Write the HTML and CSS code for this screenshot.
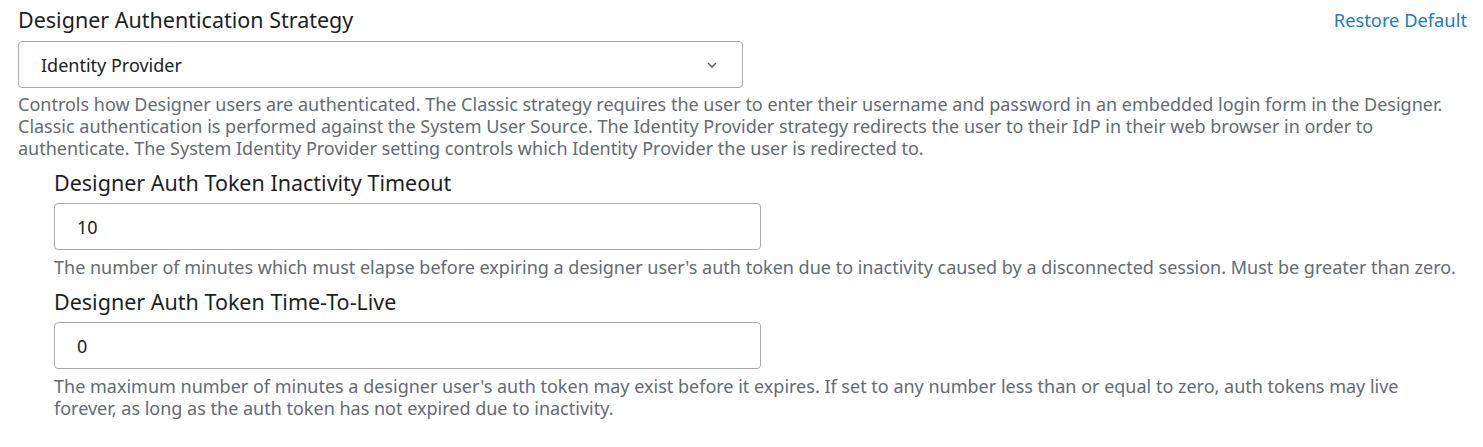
FILE: index.html
```html
<!DOCTYPE html>
<html>
<head>
<meta charset="utf-8">
<link rel="stylesheet" href="styles.css">
</head>
<body>
<div class="page">
  <div class="field">
    <div class="field-head">
      <div class="label">Designer Authentication Strategy</div>
      <a class="restore">Restore Default</a>
    </div>
    <div class="select">
      <span>Identity Provider</span>
      <svg class="chev" width="12" height="8" viewBox="0 0 12 8"><path d="M2 2 L6 6 L10 2" fill="none" stroke="#555" stroke-width="1.5"/></svg>
    </div>
    <div class="desc">Controls how Designer users are authenticated. The Classic strategy requires the user to enter their username and password in an embedded login form in the Designer. Classic authentication is performed against the System User Source. The Identity Provider strategy redirects the user to their IdP in their web browser in order to authenticate. The System Identity Provider setting controls which Identity Provider the user is redirected to.</div>
  </div>
  <div class="sub">
    <div class="field">
      <div class="label">Designer Auth Token Inactivity Timeout</div>
      <div class="input">10</div>
      <div class="desc">The number of minutes which must elapse before expiring a designer user's auth token due to inactivity caused by a disconnected session. Must be greater than zero.</div>
    </div>
    <div class="field">
      <div class="label">Designer Auth Token Time-To-Live</div>
      <div class="input">0</div>
      <div class="desc">The maximum number of minutes a designer user's auth token may exist before it expires. If set to any number less than or equal to zero, auth tokens may live forever, as long as the auth token has not expired due to inactivity.</div>
    </div>
  </div>
</div>
</body>
</html>
```
FILE: styles.css
```css
* { box-sizing: border-box; }
body {
  margin: 0;
  font-family: "Noto Sans", "Open Sans", sans-serif;
  background: #fff;
  color: #222;
}
.page {
  padding: 6px 16px 0 18px;
}
.field-head {
  display: flex;
  justify-content: space-between;
  align-items: center;
}
.label {
  font-size: 21.5px;
  color: #1e1e1e;
  line-height: 28px;
}
.restore {
  font-size: 18.3px;
  color: #1a7bb9;
  line-height: 28px;
}
.select {
  margin-top: 7px;
  width: 725px;
  height: 47px;
  border: 1px solid #a7abaf;
  border-radius: 4px;
  display: flex;
  align-items: center;
  justify-content: space-between;
  padding: 0 24px 0 22px;
  font-size: 18px;
  color: #222;
}
.desc {
  margin-top: 5px;
  padding-right: 6px;
  font-size: 18px;
  line-height: 22px;
  color: #666a6e;
}
.sub {
  padding-left: 36px;
  padding-top: 10px;
}
.sub .field + .field { margin-top: 10px; }
.input {
  margin-top: 6px;
  width: 707px;
  height: 47px;
  border: 1px solid #a7abaf;
  border-radius: 4px;
  display: flex;
  align-items: center;
  padding-left: 22px;
  font-size: 18px;
  color: #222;
}
.sub .field .desc { margin-top: 6px; }
```
